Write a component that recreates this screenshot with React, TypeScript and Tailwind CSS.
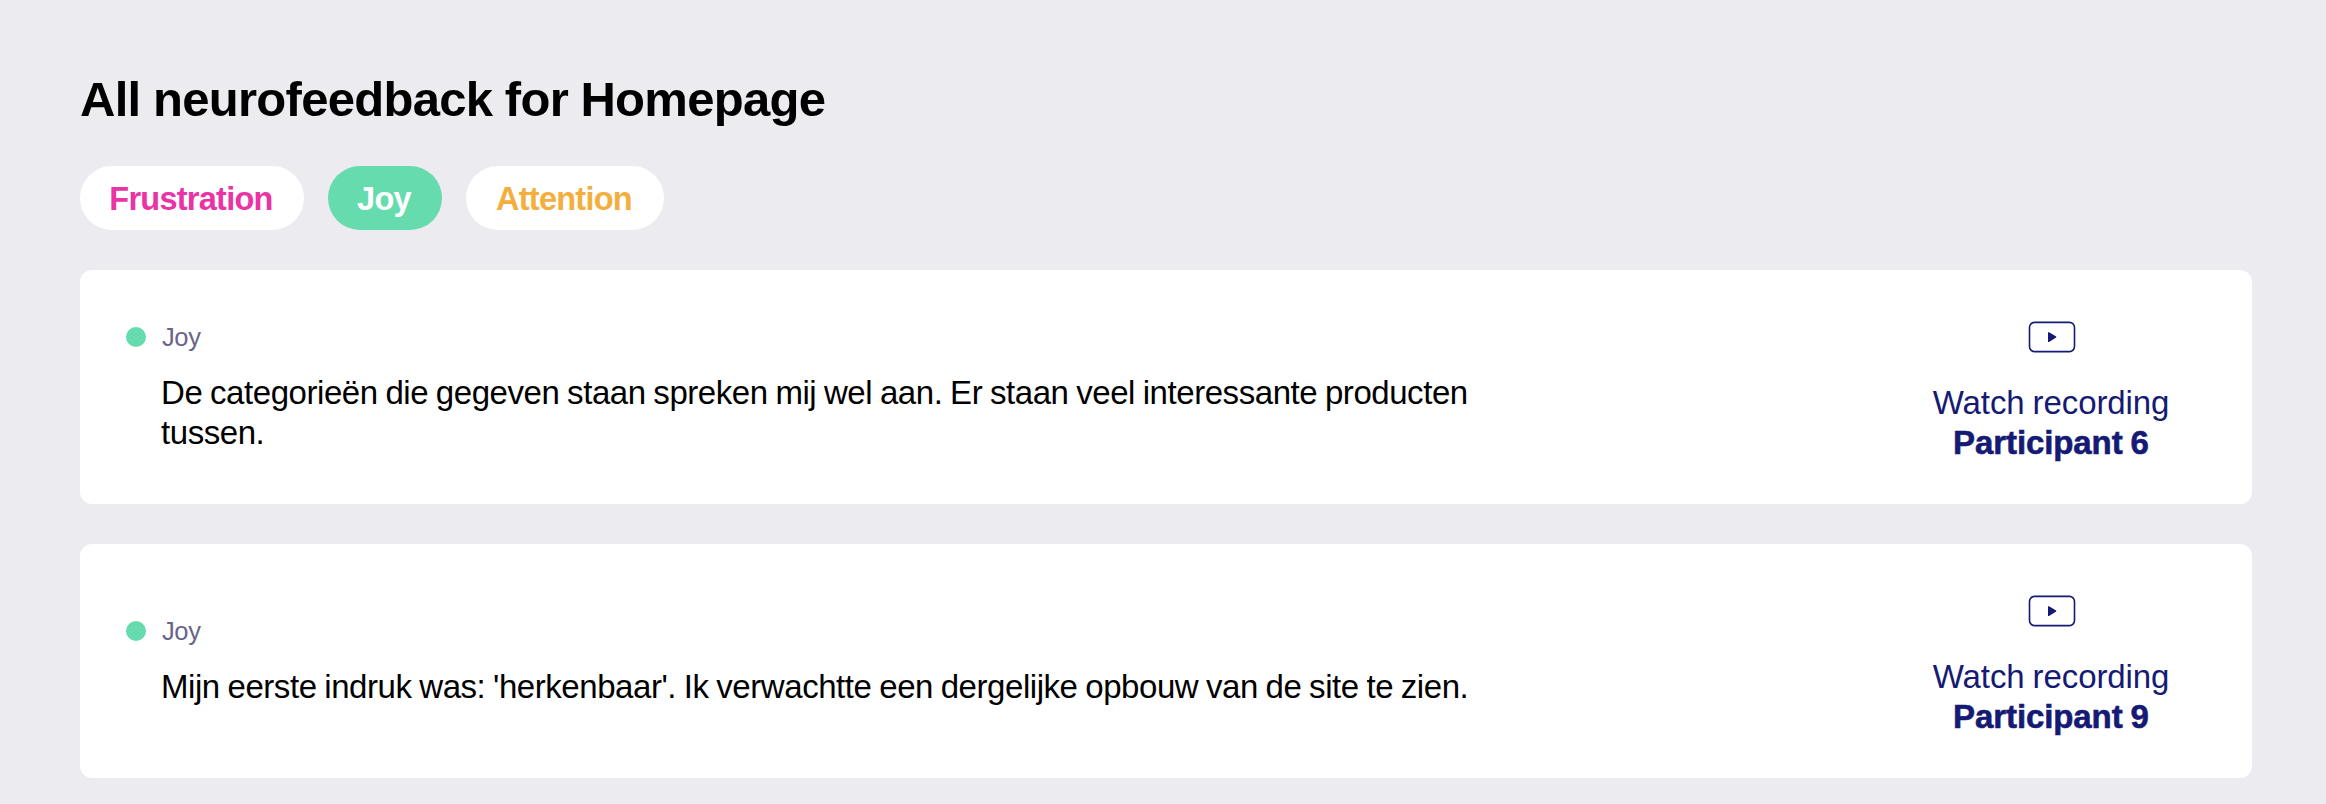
import React from "react";

type TagProps = { label: string; className: string };

function Tag({ label, className }: TagProps) {
  return (
    <button className={`flex h-16 items-center justify-center rounded-full pt-0.5 pr-0.5 font-bold whitespace-nowrap text-[32.5px] tracking-[-0.75px] ${className}`}>
      {label}
    </button>
  );
}

type LineProps = { text: string; className?: string };

function Line({ text, className = "" }: LineProps) {
  return <div className={`w-fit whitespace-nowrap ${className}`}>{text}</div>;
}

type CardProps = { lines: string[]; participant: string };

function Card({ lines, participant }: CardProps) {
  return (
    <article className="flex h-[234px] items-center justify-between rounded-xl bg-white pl-[46px] pr-[81px]">
      <div className="flex gap-[15px] pb-[3px]">
        <span className="mt-[9px] size-5 rounded-full bg-[#66dcae]" />
        <div>
          <Line text="Joy" className="pl-px text-[25.5px] leading-[38px] tracking-[-0.4px] text-[#68648a]" />
          <div className="mt-[17px] text-[33px] leading-10 tracking-[-0.44px] text-black [word-spacing:-1px]">
            {lines.map((text) => (
              <Line key={text} text={text} />
            ))}
          </div>
        </div>
      </div>
      <a className="flex w-[238px] flex-col items-center pt-[9px] text-[33px] leading-10 tracking-[-0.1px] text-[#151a74] [word-spacing:-1px]">
        <svg width="48" height="32" viewBox="0 0 48 32" fill="none">
          <rect x="1.5" y="1.4" width="45" height="29.2" rx="5" stroke="currentColor" strokeWidth="1.6" />
          <path d="M20 11.2v9.8h1l7.2-4.4v-1L21 11.2z" fill="currentColor" />
        </svg>
        <Line text="Watch recording" className="mt-[30px] pr-0.5" />
        <Line text={participant} className="pr-0.5 font-bold [-webkit-text-stroke:0.6px]" />
      </a>
    </article>
  );
}

export default function App() {
  return (
    <main className="h-[804px] overflow-hidden bg-[#ecebf0] pl-20 pr-[74px] pt-[72px] font-['Liberation_Sans',Arial,sans-serif]">
      <h1 className="h-[56px] w-fit text-[49px] leading-[55px] font-bold tracking-[-0.7px] whitespace-nowrap [word-spacing:-0.5px]">
        All neurofeedback for Homepage
      </h1>
      <div className="mt-[38px] flex gap-6">
        <Tag label="Frustration" className="w-[224px] bg-white text-[#ea33a5]" />
        <Tag label="Joy" className="w-[114px] bg-[#66dcae] text-white" />
        <Tag label="Attention" className="w-[198px] bg-white text-[#f4ae3d]" />
      </div>
      <div className="mt-10 flex flex-col gap-10">
        <Card
          participant="Participant 6"
          lines={["De categorieën die gegeven staan spreken mij wel aan. Er staan veel interessante producten", "tussen."]}
        />
        <Card
          participant="Participant 9"
          lines={["Mijn eerste indruk was: 'herkenbaar'. Ik verwachtte een dergelijke opbouw van de site te zien."]}
        />
      </div>
    </main>
  );
}
